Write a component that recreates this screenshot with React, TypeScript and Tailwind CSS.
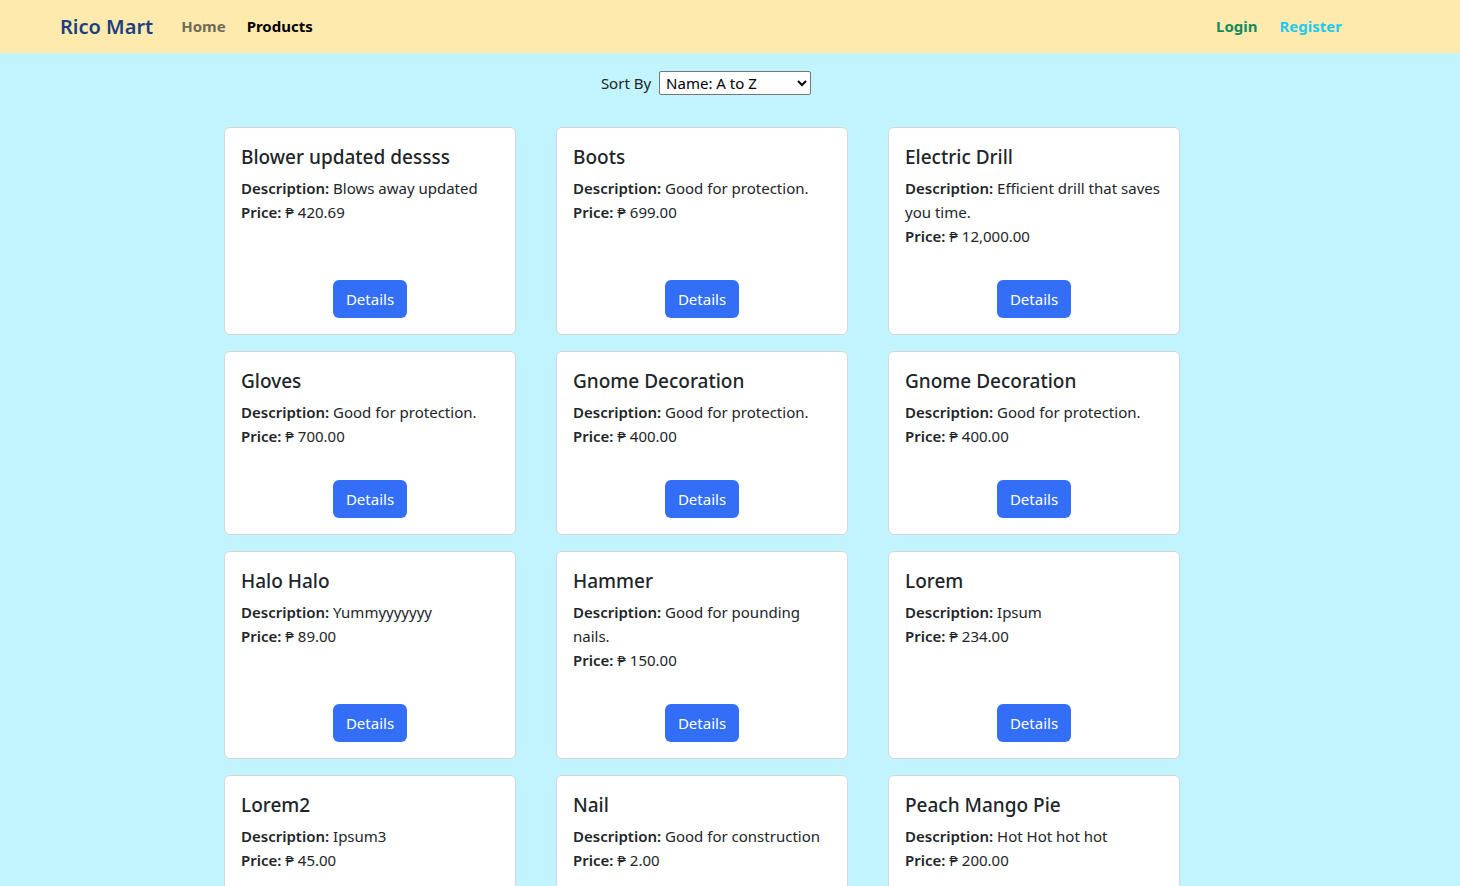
import React from "react";

type P = { name: string; desc: string; price: string };

const products: P[] = [
  { name: "Blower updated dessss", desc: "Blows away updated", price: "420.69" },
  { name: "Boots", desc: "Good for protection.", price: "699.00" },
  { name: "Electric Drill", desc: "Efficient drill that saves you time.", price: "12,000.00" },
  { name: "Gloves", desc: "Good for protection.", price: "700.00" },
  { name: "Gnome Decoration", desc: "Good for protection.", price: "400.00" },
  { name: "Gnome Decoration", desc: "Good for protection.", price: "400.00" },
  { name: "Halo Halo", desc: "Yummyyyyyyy", price: "89.00" },
  { name: "Hammer", desc: "Good for pounding nails.", price: "150.00" },
  { name: "Lorem", desc: "Ipsum", price: "234.00" },
  { name: "Lorem2", desc: "Ipsum3", price: "45.00" },
  { name: "Nail", desc: "Good for construction", price: "2.00" },
  { name: "Peach Mango Pie", desc: "Hot Hot hot hot", price: "200.00" },
];

export default function App() {
  return (
    <div
      className="min-h-screen bg-[#c2f4fd] text-[#212529]"
      style={{ fontFamily: '"Noto Sans", "Open Sans", sans-serif' }}
    >
      <nav className="h-[53px] bg-[#ffeaad] flex items-center pl-[60px] pr-[118px]">
        <span className="text-[20px] font-semibold text-[#1b3f80]">Rico Mart</span>
        <span className="ml-[28px] font-bold text-[15px] text-[#6e6a5a]">Home</span>
        <span className="ml-[21px] font-bold text-[15px] text-black">Products</span>
        <div className="ml-auto flex items-center gap-[22px] font-bold text-[15px]">
          <span className="text-[#148a5e]">Login</span>
          <span className="text-[#1fc8ef]">Register</span>
        </div>
      </nav>

      <div className="flex justify-center items-center mt-[18px] gap-2 text-[15px] pr-[48px]">
        <span>Sort By</span>
        <select
          className="w-[152px] h-[24px] border border-[#767676] rounded-[2px] bg-white text-[15px] px-[2px] text-black"
          defaultValue="az"
        >
          <option value="az">Name: A to Z</option>
          <option value="za">Name: Z to A</option>
        </select>
      </div>

      <div className="ml-[224px] mt-[32px] grid grid-cols-[repeat(3,292px)] gap-x-10 gap-y-4 pb-10">
        {products.map((p, i) => (
          <div
            key={i}
            className="bg-white border border-[#d6d6d6] rounded-[6px] p-4 flex flex-col"
          >
            <h5 className="text-[19px] font-medium leading-[26px] mb-[6px]">{p.name}</h5>
            <p className="text-[15px] leading-[24px]">
              <span className="font-semibold">Description:</span> {p.desc}
            </p>
            <p className="text-[15px] leading-[24px] mb-8">
              <span className="font-semibold">Price:</span> ₱ {p.price}
            </p>
            <div className="mt-auto flex justify-center">
              <button className="h-[38px] px-[13px] rounded-[6px] bg-[#326ff6] text-white text-[15px]">
                Details
              </button>
            </div>
          </div>
        ))}
      </div>
    </div>
  );
}
